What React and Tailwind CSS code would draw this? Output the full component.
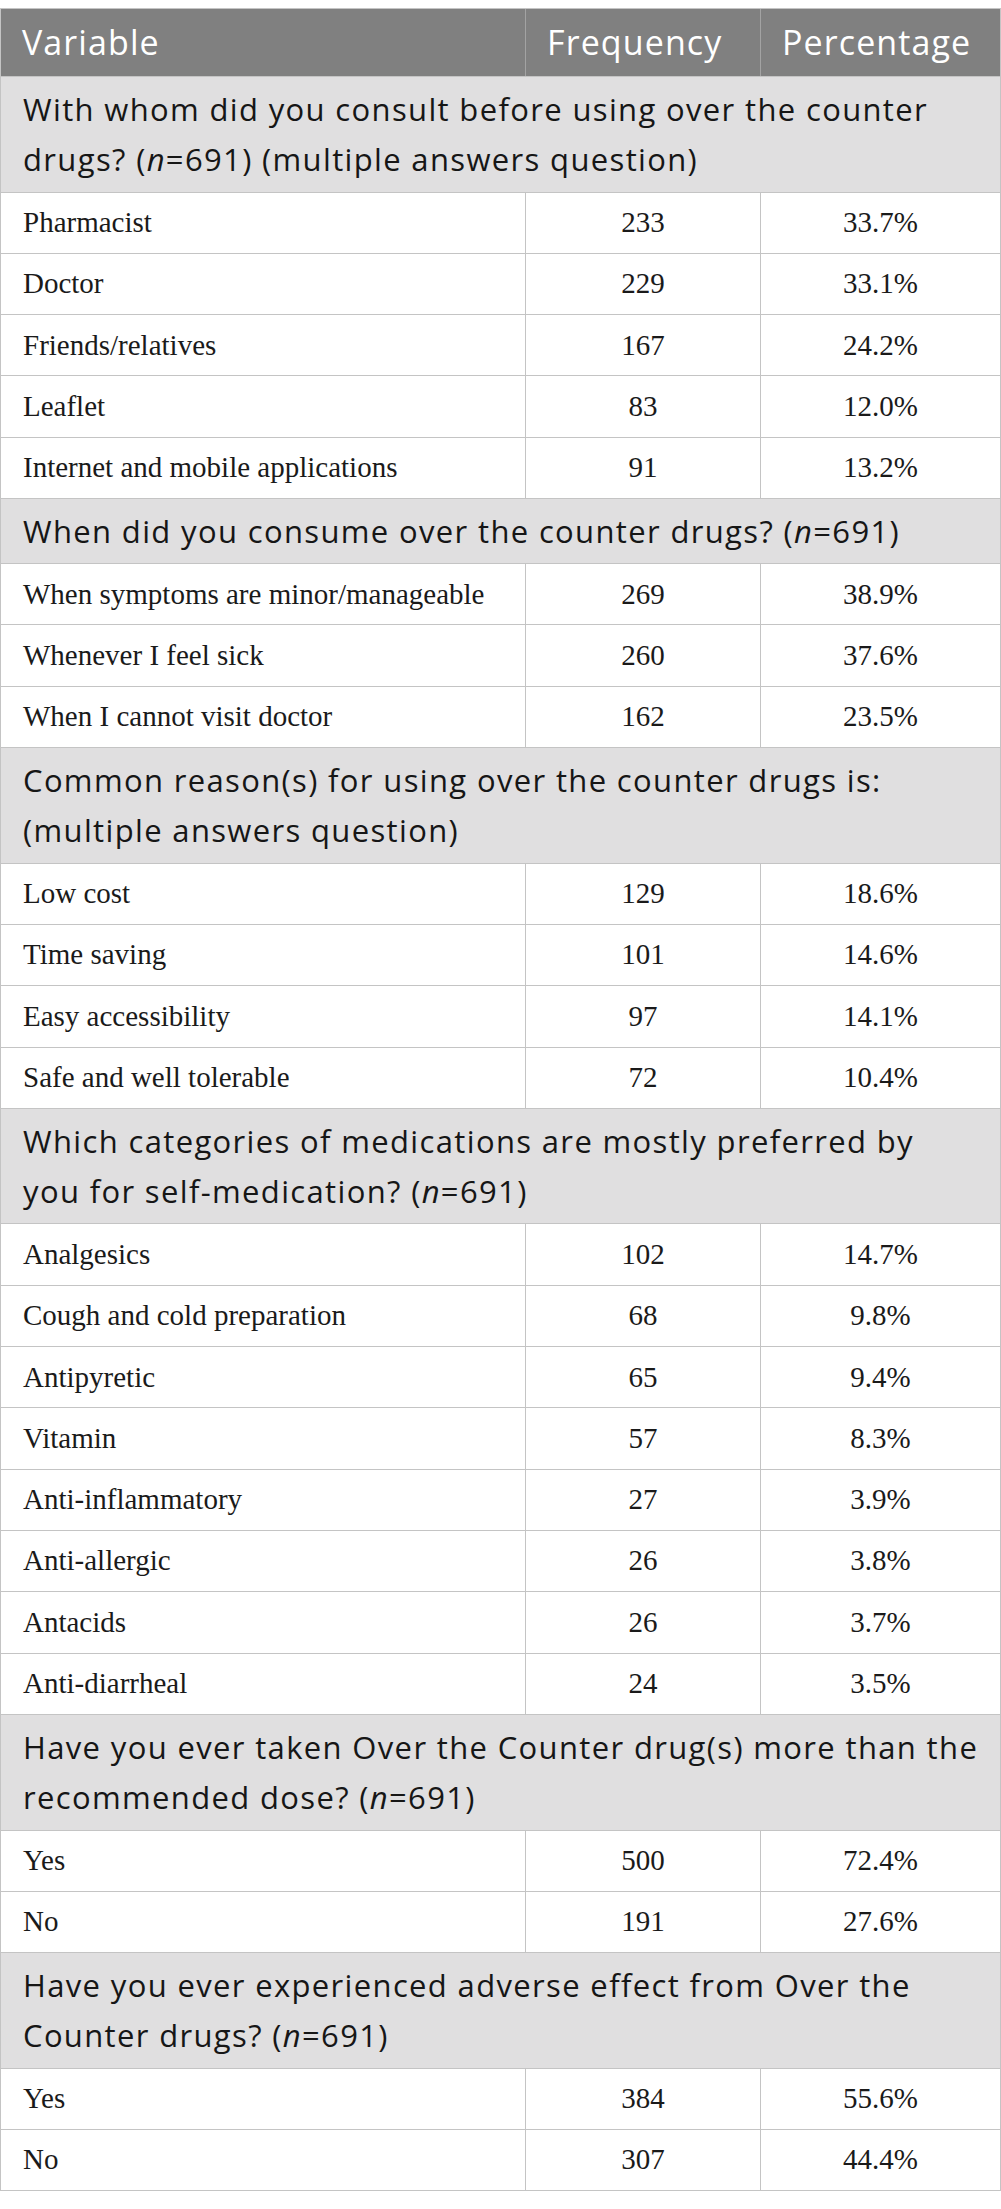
import React from "react";

const sections = [
  {
    lines: [
      <>With whom did you consult before using over the counter</>,
      <>drugs? (<i>n</i>=691) (multiple answers question)</>,
    ],
    rows: [
      ["Pharmacist", "233", "33.7%"],
      ["Doctor", "229", "33.1%"],
      ["Friends/relatives", "167", "24.2%"],
      ["Leaflet", "83", "12.0%"],
      ["Internet and mobile applications", "91", "13.2%"],
    ],
  },
  {
    lines: [<>When did you consume over the counter drugs? (<i>n</i>=691)</>],
    rows: [
      ["When symptoms are minor/manageable", "269", "38.9%"],
      ["Whenever I feel sick", "260", "37.6%"],
      ["When I cannot visit doctor", "162", "23.5%"],
    ],
  },
  {
    lines: [
      <>Common reason(s) for using over the counter drugs is:</>,
      <>(multiple answers question)</>,
    ],
    rows: [
      ["Low cost", "129", "18.6%"],
      ["Time saving", "101", "14.6%"],
      ["Easy accessibility", "97", "14.1%"],
      ["Safe and well tolerable", "72", "10.4%"],
    ],
  },
  {
    lines: [
      <>Which categories of medications are mostly preferred by</>,
      <>you for self-medication? (<i>n</i>=691)</>,
    ],
    rows: [
      ["Analgesics", "102", "14.7%"],
      ["Cough and cold preparation", "68", "9.8%"],
      ["Antipyretic", "65", "9.4%"],
      ["Vitamin", "57", "8.3%"],
      ["Anti-inflammatory", "27", "3.9%"],
      ["Anti-allergic", "26", "3.8%"],
      ["Antacids", "26", "3.7%"],
      ["Anti-diarrheal", "24", "3.5%"],
    ],
  },
  {
    lines: [
      <>Have you ever taken Over the Counter drug(s) more than the</>,
      <>recommended dose? (<i>n</i>=691)</>,
    ],
    rows: [
      ["Yes", "500", "72.4%"],
      ["No", "191", "27.6%"],
    ],
  },
  {
    lines: [
      <>Have you ever experienced adverse effect from Over the</>,
      <>Counter drugs? (<i>n</i>=691)</>,
    ],
    rows: [
      ["Yes", "384", "55.6%"],
      ["No", "307", "44.4%"],
    ],
  },
];

const sans = "font-['Open_Sans','Liberation_Sans',sans-serif]";
const serif = "font-['Liberation_Serif','DejaVu_Serif',serif]";

function SectionRow({ lines }) {
  return (
    <div
      className={`border-b border-[#c4c4c4] bg-[#e0dfe0] px-[22px] text-[31px] leading-[50px] tracking-[1.35px] text-[#161616] ${sans} ${
        lines.length > 1 ? "h-[115.5px] pt-[7px]" : "h-[65px] pt-[7px]"
      }`}
    >
      {lines.map((l, i) => (
        <div key={i} className="whitespace-nowrap">
          {l}
        </div>
      ))}
    </div>
  );
}

function DataRow({ row }) {
  return (
    <div
      className={`grid h-[61.33px] grid-cols-[524px_235px_1fr] border-b border-[#c4c4c4] text-[29px] text-[#1a1a1a] ${serif}`}
    >
      <div className="flex items-center px-[22px] whitespace-nowrap">{row[0]}</div>
      <div className="flex items-center justify-center border-l border-[#c4c4c4]">{row[1]}</div>
      <div className="flex items-center justify-center border-l border-[#c4c4c4]">{row[2]}</div>
    </div>
  );
}

export default function App() {
  return (
    <div className="bg-white pt-2">
      <div className="w-[1001px] border-x border-t border-[#c4c4c4]">
        <div
          className={`grid h-[68px] grid-cols-[524px_235px_1fr] border-b border-[#c4c4c4] bg-[#808080] text-[34px] tracking-[1.1px] text-white ${sans}`}
        >
          <div className="flex items-center px-[21px]">Variable</div>
          <div className="flex items-center border-l border-[#a3a3a3] px-[21px]">Frequency</div>
          <div className="flex items-center border-l border-[#a3a3a3] px-[21px]">Percentage</div>
        </div>
        {sections.map((s, i) => (
          <div key={i}>
            <SectionRow lines={s.lines} />
            {s.rows.map((r, j) => (
              <DataRow key={j} row={r} />
            ))}
          </div>
        ))}
      </div>
    </div>
  );
}
